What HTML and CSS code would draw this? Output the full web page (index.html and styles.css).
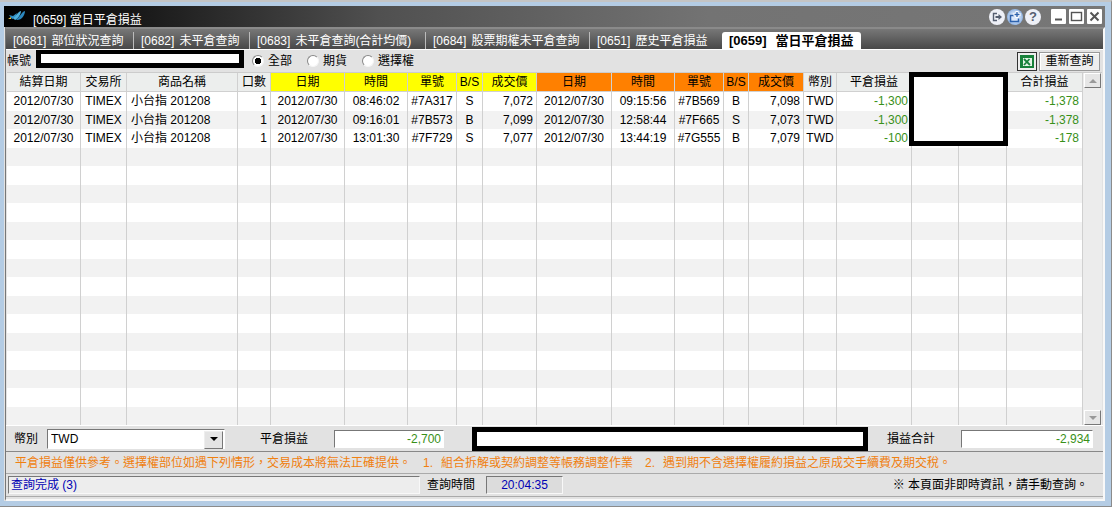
FILE: index.html
```html
<!DOCTYPE html>
<html lang="zh-Hant">
<head>
  <meta charset="UTF-8" />
  <meta name="viewport" content="width=device-width, initial-scale=1.0"/>
  <title>[0659] 當日平倉損益</title>
  <link rel="stylesheet" href="styles.css">
</head>
<body>
  <div class="window">
    <header class="titlebar">
      <svg class="logo" width="18" height="12" viewBox="0 0 18 12">
        <path d="M1 5 L5 6 L9 3 L7 8 L4 9 Z" fill="#2f8ec4"/>
        <path d="M5 8 C8 7 9 2 13 1 C13 4 10 9 7 10 Z" fill="#4fb0dc"/>
        <path d="M8 9 C12 8 13 2 17 1 C17 5 14 10 9 10 Z" fill="#2b86bd"/>
        <path d="M0 9 L3 7 L3 9 Z" fill="#e6c34a"/>
      </svg>
      <h1>[0659] 當日平倉損益</h1>
      <div class="round-buttons">
        <button class="round" aria-label="匯出">
          <svg width="16" height="16" viewBox="0 0 16 16" fill="none" stroke="#555e70">
            <path d="M8 4.500 H4.500 V11.500 H8" stroke-width="1.4"/>
            <path d="M6.500 8 H10" stroke-width="2"/>
            <path d="M9.500 5 L13 8 L9.500 11 Z" fill="#555e70" stroke="none"/>
          </svg>
        </button>
        <button class="round blue" aria-label="新增視窗">
          <svg width="16" height="16" viewBox="0 0 16 16" fill="none">
            <path d="M7 6.500 H3.500 V12.500 H11.500 V9.500" stroke="#2d62ad" stroke-width="1.5"/>
            <path d="M10 2 V9 M6.500 5.500 H13.500" stroke="#fff" stroke-width="3"/>
            <path d="M10 3 V8 M7.500 5.500 H12.500" stroke="#2d62ad" stroke-width="1.3"/>
          </svg>
        </button>
        <button class="round help" aria-label="說明">?</button>
      </div>
      <div class="window-buttons">
        <button aria-label="最小化"><svg width="15" height="15" viewBox="0 0 15 15"><path d="M4 10.500 H11" stroke="#555" stroke-width="2"/></svg></button>
        <button aria-label="最大化"><svg width="15" height="15" viewBox="0 0 15 15"><rect x="2.500" y="3.500" width="10" height="8" fill="none" stroke="#555" stroke-width="1.4"/></svg></button>
        <button aria-label="關閉"><svg width="15" height="15" viewBox="0 0 15 15"><path d="M3.500 3.500 L11.500 11.500 M11.500 3.500 L3.500 11.500" stroke="#555" stroke-width="2"/></svg></button>
      </div>
    </header>

    <main class="panel">
      <nav class="tabs">
        <a href="#0681"><span>[0681]</span>部位狀況查詢</a>
        <a href="#0682"><span>[0682]</span>未平倉查詢</a>
        <a href="#0683"><span>[0683]</span>未平倉查詢(合計均價)</a>
        <a href="#0684"><span>[0684]</span>股票期權未平倉查詢</a>
        <a href="#0651"><span>[0651]</span>歷史平倉損益</a>
        <a href="#0659" class="active"><span>[0659]</span>當日平倉損益</a>
      </nav>

      <div class="toolbar">
        <label for="account">帳號</label>
        <input type="text" id="account" class="account" />
        <label class="radio"><input type="radio" name="kind" checked />全部</label>
        <label class="radio"><input type="radio" name="kind" />期貨</label>
        <label class="radio"><input type="radio" name="kind" />選擇權</label>
        <button class="excel" aria-label="匯出 Excel">
          <svg width="14" height="13" viewBox="0 0 14 13">
            <rect width="14" height="13" fill="#17813a"/>
            <rect x="3" y="3" width="9" height="8" fill="#e4f3e6"/>
            <path d="M4 4 L10 10 M9.500 4 L4 10" stroke="#17813a" stroke-width="1.8"/>
          </svg>
        </button>
        <button class="query">重新查詢</button>
      </div>

      <div class="grid">
        <table>
          <colgroup>
            <col><col><col><col><col><col><col><col><col><col><col><col><col><col><col><col><col><col><col>
          </colgroup>
          <thead>
            <tr>
              <th>結算日期</th><th>交易所</th><th>商品名稱</th><th>口數</th>
              <th class="open">日期</th><th class="open">時間</th><th class="open">單號</th><th class="open">B/S</th><th class="open">成交價</th>
              <th class="close">日期</th><th class="close">時間</th><th class="close">單號</th><th class="close">B/S</th><th class="close">成交價</th>
              <th>幣別</th><th>平倉損益</th><th></th><th></th><th>合計損益</th>
            </tr>
          </thead>
          <tbody id="rows"></tbody>
        </table>
        <div class="scrollbar">
          <button class="up" aria-label="向上捲動"></button>
          <button class="down" aria-label="向下捲動"></button>
        </div>
        <div class="mask"></div>
      </div>

      <div class="summary">
        <label for="currency">幣別</label>
        <span class="select-box">
          <select id="currency"><option>TWD</option></select>
        </span>
        <label for="closed" class="closed-label">平倉損益</label>
        <input type="text" id="closed" class="amount closed" value="-2,700" readonly />
        <div class="mask-bar"></div>
        <label for="total" class="total-label">損益合計</label>
        <input type="text" id="total" class="amount total" value="-2,934" readonly />
      </div>

      <p class="notice">
        <span>平倉損益僅供參考。選擇權部位如遇下列情形，交易成本將無法正確提供。</span>
        <span><b>1.</b>組合拆解或契約調整等帳務調整作業</span>
        <span><b>2.</b>遇到期不含選擇權履約損益之原成交手續費及期交稅。</span>
      </p>

      <footer class="status">
        <span class="message">查詢完成 (3)</span>
        <span>查詢時間</span>
        <span class="time">20:04:35</span>
        <span class="hint">※ 本頁面非即時資訊，請手動查詢。</span>
      </footer>
    </main>
  </div>

  <script>
    const ROW_COUNT = 18;
    const trades = [
      ['2012/07/30', 'TIMEX', '小台指 201208', '1', '2012/07/30', '08:46:02', '#7A317', 'S', '7,072', '2012/07/30', '09:15:56', '#7B569', 'B', '7,098', 'TWD', '-1,300', '', '', '-1,378'],
      ['2012/07/30', 'TIMEX', '小台指 201208', '1', '2012/07/30', '09:16:01', '#7B573', 'B', '7,099', '2012/07/30', '12:58:44', '#7F665', 'S', '7,073', 'TWD', '-1,300', '', '', '-1,378'],
      ['2012/07/30', 'TIMEX', '小台指 201208', '1', '2012/07/30', '13:01:30', '#7F729', 'S', '7,077', '2012/07/30', '13:44:19', '#7G555', 'B', '7,079', 'TWD', '-100', '', '', '-178']
    ];
    const alignClass = { 2: 'left', 3: 'num', 8: 'num', 13: 'num', 15: 'num loss', 18: 'num loss' };

    const tbody = document.getElementById('rows');
    for (let r = 0; r < ROW_COUNT; r++) {
      const tr = tbody.insertRow();
      for (let c = 0; c < 19; c++) {
        const td = tr.insertCell();
        td.className = alignClass[c] || '';
        td.textContent = trades[r] ? trades[r][c] : '';
      }
    }
  </script>
</body>
</html>
```
FILE: styles.css
```css
* {
  box-sizing: border-box;
}

body {
  margin: 0;
  height: 100vh;
  min-height: 400px;
  padding: 4px 6px 5px 4px;
  border-top: 2px solid #c4c4c4;
  border-right: 1px solid #8b8b8b;
  border-bottom: 1px solid #8b8b8b;
  background: #b4cce4;
  color: #000;
  font-family: "Liberation Sans", "Noto Sans CJK TC", sans-serif;
  font-size: 12px;
  line-height: 16px;
}

button,
input,
select {
  margin: 0;
  padding: 0;
  font: inherit;
  color: inherit;
}

.window {
  display: flex;
  flex-direction: column;
  height: 100%;
  background: #e2e2e2;
}

/* title bar */
.titlebar {
  display: flex;
  align-items: center;
  flex: none;
  height: 21px;
  padding: 0 3px 0 4px;
  background: linear-gradient(to right, #000 0%, #181818 12%, #505050 34%, #737373 64%, #777 100%);
  color: #fff;
}

.logo {
  margin-bottom: 2px;
}

h1 {
  margin: 0;
  padding: 7px 0 0 7px;
  font-size: 12px;
  font-weight: normal;
  line-height: 14px;
}

.round-buttons {
  display: flex;
  gap: 2px;
  margin-left: auto;
}

.titlebar button {
  display: flex;
  align-items: center;
  justify-content: center;
  border: none;
}

.round {
  width: 16px;
  height: 16px;
  border-radius: 50%;
  background: #eef0f7;
}

.round.blue {
  background: radial-gradient(circle, #dce9fb 30%, #5b8ed0 100%);
}

.round.help {
  color: #555e70;
  font-size: 13px;
  font-weight: bold;
}

.window-buttons {
  display: flex;
  gap: 3px;
  margin-left: 10px;
}

.window-buttons button {
  width: 15px;
  height: 15px;
  border-radius: 1px;
  background: #fff;
}

.panel {
  display: flex;
  flex-direction: column;
  flex: 1;
  min-height: 0;
  margin-left: 1px;
  border-top: 2px solid #8a8a8a;
  border-left: 1px solid #777;
  border-right: 2px solid #f8f8f8;
  border-bottom: 2px solid #f8f8f8;
}

/* tabs */
.tabs {
  display: flex;
  flex: none;
  height: 21px;
  padding-top: 3px;
  background: linear-gradient(to bottom, #777, #484848);
  border-bottom: 1px solid #fff;
}

.tabs a {
  display: flex;
  gap: 5px;
  height: 17px;
  padding-left: 7px;
  color: #fff;
  line-height: 18px;
  text-decoration: none;
  white-space: nowrap;
  border-right: 1px solid #bbb;
}

.tabs a:nth-child(1) { width: 128px; }
.tabs a:nth-child(2) { width: 116px; }
.tabs a:nth-child(3) { width: 176px; }
.tabs a:nth-child(4) { width: 164px; }
.tabs a:nth-child(5) { width: 132px; border-right: none; }

.tabs .active {
  width: 139px;
  gap: 9px;
  background: #fff;
  border: none;
  border-radius: 3px 3px 0 0;
  color: #000;
  font-size: 13px;
  font-weight: bold;
}

/* toolbar */
.toolbar {
  display: flex;
  align-items: center;
  flex: none;
  height: 22px;
  padding: 0 3px 0 1px;
}

.account {
  width: 208px;
  height: 18px;
  margin: 0 8px 4px 5px;
  border: 5px solid #000;
  border-top-width: 4px;
  background: #fff;
}

.radio {
  display: flex;
  align-items: center;
  gap: 4px;
  margin-right: 15px;
}

.radio input {
  appearance: none;
  width: 12px;
  height: 12px;
  border: 1px solid #888;
  border-right-color: #f5f5f5;
  border-bottom-color: #f5f5f5;
  border-radius: 50%;
  background: #fff;
}

.radio input:checked {
  background: radial-gradient(circle, #000 0 3px, #fff 3px);
}

.excel,
.query {
  display: flex;
  align-items: center;
  justify-content: center;
  height: 19px;
  border: 1px solid #999;
  background: #eee;
}

.excel {
  width: 20px;
  margin: 0 2px 0 auto;
  border: 1px solid #333;
}

.query {
  width: 61px;
  box-shadow: inset 1px 1px #fff;
}

/* grid */
.grid {
  position: relative;
  display: flex;
  flex: 1;
  min-height: 0;
  margin: 0 1px;
  border-top: 1px solid #ccc;
  background: #fff;
}

table {
  flex: 1;
  width: 0;
  height: 100%;
  table-layout: fixed;
  border-collapse: separate;
  border-spacing: 0;
}

col:nth-child(1) { width: 74px; }
col:nth-child(2) { width: 46px; }
col:nth-child(3) { width: 111px; }
col:nth-child(4) { width: 33px; }
col:nth-child(5) { width: 74px; }
col:nth-child(6) { width: 63px; }
col:nth-child(7) { width: 49px; }
col:nth-child(8) { width: 26px; }
col:nth-child(9) { width: 54px; }
col:nth-child(10) { width: 75px; }
col:nth-child(11) { width: 63px; }
col:nth-child(12) { width: 49px; }
col:nth-child(13) { width: 25px; }
col:nth-child(14) { width: 55px; }
col:nth-child(15) { width: 33px; }
col:nth-child(16) { width: 75px; }
col:nth-child(17) { width: 47px; }
col:nth-child(18) { width: 48px; }

th,
td {
  padding: 0;
  border-right: 1px solid #d0d0d0;
  line-height: 16px;
  text-align: center;
  white-space: nowrap;
}

th {
  height: 19px;
  background: #eceeed;
  border-bottom: 1px solid #d0d0d0;
  font-weight: normal;
}

th.open {
  background: #ff0;
}

th.close {
  background: #ff8000;
}

td {
  height: 18px;
}

tbody tr:nth-child(even) {
  background: #f2f2f2;
}

td.left {
  padding-left: 4px;
  text-align: left;
}

td.num {
  padding-right: 3px;
  text-align: right;
}

.loss,
.amount {
  color: #389018;
}

.scrollbar {
  display: flex;
  flex-direction: column;
  justify-content: space-between;
  width: 19px;
  padding: 0 1px;
  background: #ececec;
}

.scrollbar button {
  display: flex;
  align-items: center;
  justify-content: center;
  width: 17px;
  height: 15px;
  border: 1px solid #fff;
  border-right-color: #777;
  border-bottom-color: #777;
  background: #e6e6e6;
}

.scrollbar button::before {
  content: "";
  border: 4px solid transparent;
}

.scrollbar .up::before {
  border-top: none;
  border-bottom-color: #999;
}

.scrollbar .down::before {
  border-bottom: none;
  border-top-color: #999;
}

.mask {
  position: absolute;
  top: -1px;
  right: 94px;
  width: 99px;
  height: 74px;
  border: 5px solid #000;
  background: #fff;
}

/* summary */
.summary {
  display: flex;
  align-items: center;
  flex: none;
  height: 27px;
  padding: 0 10px 0 8px;
  border-top: 1px solid #fff;
  border-bottom: 1px solid #888;
}

.summary label {
  white-space: nowrap;
}

.select-box {
  position: relative;
  width: 178px;
  margin-left: 9px;
}

.select-box select {
  display: block;
  appearance: none;
  width: 100%;
  height: 20px;
  padding-left: 3px;
  border: 1px solid #fff;
  border-top-color: #777;
  border-left-color: #777;
  border-radius: 0;
  background: #fff;
}

/* drop-down button */
.select-box::before {
  content: "";
  position: absolute;
  top: 2px;
  right: 2px;
  width: 17px;
  height: 16px;
  border: 1px solid #eee;
  border-right-color: #777;
  border-bottom-color: #777;
  background: #e4e4e4;
  pointer-events: none;
}

.select-box::after {
  content: "";
  position: absolute;
  top: 8px;
  right: 7px;
  border: 4px solid transparent;
  border-top-color: #000;
  border-bottom: none;
  pointer-events: none;
}

.closed-label {
  margin-left: 35px;
}

.amount {
  height: 18px;
  padding-right: 2px;
  border: 1px solid #fff;
  border-top-color: #777;
  border-left-color: #777;
  background: #fff;
  text-align: right;
}

.closed {
  width: 110px;
  margin-left: 26px;
}

.mask-bar {
  flex: 1;
  height: 24px;
  margin-left: 28px;
  border: 5px solid #000;
  background: #fff;
}

.total-label {
  margin-left: 19px;
}

.total {
  width: 132px;
  margin-left: 26px;
}

/* notice */
.notice {
  display: flex;
  align-items: center;
  flex: none;
  gap: 12px;
  height: 22px;
  margin: 0;
  padding-left: 9px;
  color: #f08010;
  white-space: nowrap;
  border-bottom: 1px solid #aaa;
}

.notice b {
  display: inline-block;
  width: 18px;
  font-weight: normal;
}

/* status bar */
.status {
  display: flex;
  align-items: center;
  flex: none;
  height: 23px;
  margin-bottom: 2px;
  padding: 0 15px 0 2px;
  border-bottom: 1px solid #aaa;
  white-space: nowrap;
}

.message,
.time {
  height: 18px;
  border: 1px solid #f8f8f8;
  border-top-color: #777;
  border-left-color: #777;
  color: #0000b4;
}

.message {
  width: 412px;
  margin-right: 7px;
  padding-left: 2px;
  background: #ededed;
}

.time {
  width: 77px;
  margin-left: 11px;
  background: #dcdcdc;
  text-align: center;
}

.hint {
  margin-left: auto;
}
```
